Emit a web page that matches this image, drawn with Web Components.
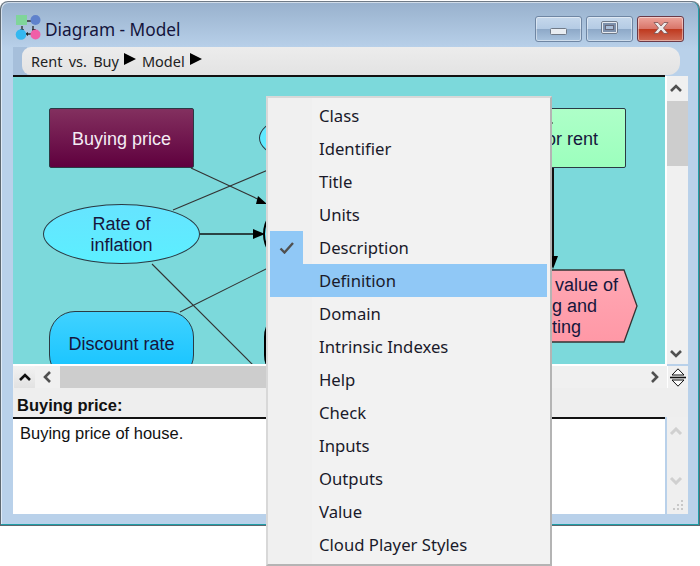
<!DOCTYPE html>
<html>
<head>
<meta charset="utf-8">
<title>Diagram - Model</title>
<style>
  html, body { margin: 0; padding: 0; background: #fff; overflow: hidden; height: 566px; }
  body { position: relative; font-family: "Noto Sans", "Liberation Sans", sans-serif; }
</style>
</head>
<body>
<app-window>
  <span slot="title">Diagram - Model</span>
  <crumb-bar slot="crumbs">
    <span>Rent vs. Buy</span>
    <span>Model</span>
  </crumb-bar>
  <diagram-canvas slot="canvas">
    <diagram-node kind="rect" x="36" y="31" w="145" h="60" top="3" fill="#83305f,#5f003e" color="#f4ecf4">Buying price</diagram-node>
    <diagram-node kind="oval" x="30" y="127" w="157" h="60" top="2" fill="#66e4ff,#5cefff">Rate of<br>inflation</diagram-node>
    <diagram-node kind="round" x="36" y="234" w="145" h="70" fill="#40d2ff,#12c2ff" pad="4">Discount rate</diagram-node>
    <diagram-node kind="oval" x="246" y="31" w="157" h="60" fill="#66e4ff,#5cefff"></diagram-node>
    <diagram-node kind="oval" x="250" y="107" w="157" h="100" fill="#66e4ff,#5cefff" heavy></diagram-node>
    <diagram-node kind="round" x="251" y="234" w="145" h="70" fill="#40d2ff,#12c2ff" heavy></diagram-node>
    <diagram-node kind="rect" x="520" y="31" w="93" h="60" top="3" fill="#aeffc8,#9cffbd" align="right" pad-right="27">or rent</diagram-node>
    <diagram-node kind="hex" x="520" y="192" w="105" h="74" fill="#ffa8b4,#ff98a6" align="left" pad-left="19"><span style="margin-left:3px">value of</span><br>g and<br>ting</diagram-node>
  </diagram-canvas>
  <scroll-v slot="vscroll"></scroll-v>
  <scroll-h slot="hscroll"></scroll-h>
  <span slot="detail-title">Buying price:</span>
  <span slot="detail-body">Buying price of house.</span>
</app-window>
<popup-menu>
  <menu-item>Class</menu-item>
  <menu-item>Identifier</menu-item>
  <menu-item>Title</menu-item>
  <menu-item>Units</menu-item>
  <menu-item checked>Description</menu-item>
  <menu-item active>Definition</menu-item>
  <menu-item>Domain</menu-item>
  <menu-item>Intrinsic Indexes</menu-item>
  <menu-item>Help</menu-item>
  <menu-item>Check</menu-item>
  <menu-item>Inputs</menu-item>
  <menu-item>Outputs</menu-item>
  <menu-item>Value</menu-item>
  <menu-item>Cloud Player Styles</menu-item>
</popup-menu>

<script>
class AppWindow extends HTMLElement {
  connectedCallback() {
    this.attachShadow({ mode: 'open' });
    this.shadowRoot.innerHTML = `
      <style>
        :host {
          display: block;
          box-sizing: border-box;
          width: 700px;
          height: 525px;
          border: 1px solid #5e6870;
          border-top-color: #6f7a86;
          border-radius: 8px 8px 0 0;
          background: linear-gradient(#98b1cd 0, #b9d1ea 47px, #b9d1ea 100%);
          box-shadow: inset 0 -1px 0 #1f9fa8, inset -1px 0 0 #1f9fa8, inset 1px 1px 0 rgba(255,255,255,.55);
          padding: 0 10px 9px 12px;
          margin-top: 1px;
        }
        .titlebar {
          height: 45px;
          display: flex;
          align-items: center;
          padding-left: 2px;
          gap: 4px;
          font: 17.300px "Noto Sans", sans-serif;
          color: #14143c;
        }
        .titlebar .text { flex: 1; padding-top: 9px; }
        .titlebar svg.app { margin-top: 5px; }
        .buttons { display: flex; gap: 4px; margin: 0 5px 0 0; align-self: flex-start; padding-top: 14px; }
        .wbtn {
          box-sizing: border-box;
          width: 47px;
          height: 26px;
          border: 1px solid #6f86a3;
          border-radius: 3px;
          box-shadow: inset 0 0 0 1px rgba(255,255,255,.45);
          background: linear-gradient(#c6d8ec 0, #b4cbe4 48%, #8ea9c8 52%, #a9c3de 100%);
          display: flex;
          align-items: center;
          justify-content: center;
        }
        .wbtn.close {
          border-color: #6b3a48;
          background: linear-gradient(#eda59c 0, #d9766a 48%, #bf3a20 52%, #cf6a55 100%);
        }
        .crumbs { margin-right: 9px; }
        .pane { display: flex; height: 289px; }
        .canvas { width: 652px; height: 289px; flex: none; }
        .vbar { width: 23px; flex: none; }
        .gap { height: 2px; width: 654px; background: #fff; }
        .split { height: 22px; }
        .detail-head {
          height: 29px;
          background: #eeeeee;
          box-sizing: border-box;
          padding: 8px 0 0 4px;
          font: bold 16.500px "Liberation Sans", sans-serif;
          color: #111;
        }
        .detail-row { display: flex; height: 97px; }
        .detail-text {
          width: 652px;
          flex: none;
          box-sizing: border-box;
          background: #fff;
          border-top: 2px solid #111;
          padding: 5px 0 0 7px;
          font: 16.500px "Liberation Sans", sans-serif;
          color: #111;
        }
        .detail-bar {
          flex: none;
          width: 21px;
          margin-left: 2px;
          background: #efefef;
          position: relative;
          display: flex;
          flex-direction: column;
          align-items: center;
          padding: 10px 3px 0 0;
          box-sizing: border-box;
          gap: 40px;
        }
        .grip { position: absolute; right: 4px; bottom: 3px; }
        .lower { width: 675px; }
      </style>
      <div class="titlebar">
        <svg class="app" width="26" height="26" viewBox="0 0 26 26">
          <path d="M11 7h7M7 12v6M18 12v6M11 20h6" stroke="#333" stroke-width="1.4"/>
          <path d="M18 5l3 2-3 2zM5 15l2 3 2-3zM17 15l2 3 2-3zM13 18l-3 2 3 2z" fill="#222"/>
          <rect x="1" y="1" width="11" height="10" fill="#7fd59a"/>
          <circle cx="20.500" cy="6" r="5" fill="#5f82cc"/>
          <circle cx="6" cy="20.500" r="5.300" fill="#34b8f0"/>
          <circle cx="20.500" cy="20.500" r="5" fill="#f05fa8"/>
        </svg>
        <span class="text"><slot name="title"></slot></span>
        <div class="buttons">
          <div class="wbtn">
            <svg width="18" height="8" style="margin-top:5px"><rect x=".5" y=".5" width="16" height="6" rx="1" fill="#e9edf2" stroke="#707a88"/></svg>
          </div>
          <div class="wbtn">
            <svg width="18" height="14" style="margin-top:-2px"><rect x="1" y="1" width="15" height="11" rx="1" fill="#7d90ab" stroke="#e6eaf0" stroke-width="2"/><rect x=".5" y=".5" width="16" height="12" rx="1.500" fill="none" stroke="#6e7a8a"/><rect x="4.500" y="4.500" width="8" height="4" fill="#a9bed8" stroke="#667"/></svg>
          </div>
          <div class="wbtn close">
            <svg width="20" height="14" style="margin-top:-2px"><path d="M3 1.500h4L10 5l3-3.500h4L12.500 7 17 12.500h-4L10 9l-3 3.500H3L7.500 7z" fill="#eceaea" stroke="#7a5050" stroke-width=".8"/></svg>
          </div>
        </div>
      </div>
      <div class="crumbs"><slot name="crumbs"></slot></div>
      <div class="pane">
        <div class="canvas"><slot name="canvas"></slot></div>
        <div class="vbar"><slot name="vscroll"></slot></div>
      </div>
      <div class="gap"></div>
      <div class="lower">
        <div class="split"><slot name="hscroll"></slot></div>
        <div class="detail-head"><slot name="detail-title"></slot></div>
        <div class="detail-row">
          <div class="detail-text"><slot name="detail-body"></slot></div>
          <div class="detail-bar">
            <svg width="14" height="9"><path d="M2 7l5-5 5 5" fill="none" stroke="#d0d0d0" stroke-width="3"/></svg>
            <svg width="14" height="9"><path d="M2 2l5 5 5-5" fill="none" stroke="#d0d0d0" stroke-width="3"/></svg>
            <svg class="grip" width="12" height="12" fill="#c8c8c8"><rect x="9" y="1" width="2" height="2"/><rect x="5" y="5" width="2" height="2"/><rect x="9" y="5" width="2" height="2"/><rect x="1" y="9" width="2" height="2"/><rect x="5" y="9" width="2" height="2"/><rect x="9" y="9" width="2" height="2"/></svg>
          </div>
        </div>
      </div>
    `;
  }
}

class CrumbBar extends HTMLElement {
  connectedCallback() {
    this.attachShadow({ mode: 'open' });
    this.shadowRoot.innerHTML = `
      <style>
        :host {
          display: block;
          height: 28px;
          background: linear-gradient(to right, #a6bfdb 14px, transparent 14px);
          font: 14.500px "Noto Sans", sans-serif;
          word-spacing: 2.500px;
          color: #222;
        }
        .bar {
          box-sizing: border-box;
          height: 28px;
          margin-left: 9px;
          border-radius: 9px 12px 12px 9px;
          background: linear-gradient(#ececec, #e3e3e3);
          display: flex;
          align-items: center;
          padding-left: 9px;
        }
        ::slotted(span) { display: inline-flex; align-items: center; }
        .arrow { width: 12px; height: 12px; margin: -4px 6px 0 5px; flex: none; }
      </style>
      <div class="bar" id="bar"></div>
    `;
    const bar = this.shadowRoot.getElementById('bar');
    [...this.children].forEach((c, i) => {
      const name = 'c' + i;
      c.slot = name;
      const s = document.createElement('slot');
      s.name = name;
      bar.appendChild(s);
      bar.insertAdjacentHTML('beforeend', '<svg class="arrow" viewBox="0 0 12 12"><path d="M0 0l12 6-12 6z" fill="#000"/></svg>');
    });
  }
}

class DiagramCanvas extends HTMLElement {
  connectedCallback() {
    this.attachShadow({ mode: 'open' });
    this.shadowRoot.innerHTML = `
      <style>
        :host {
          display: block;
          position: relative;
          box-sizing: border-box;
          width: 652px;
          height: 289px;
          background: #7cd9db;
          border-top: 2px solid #111;
          overflow: hidden;
        }
        svg { position: absolute; left: 0; top: 0; }
        .wires { stroke: #333; stroke-width: 1.100; fill: none; }
      </style>
      <slot></slot>
      <svg width="652" height="287" viewBox="13 77 652 287">
        <g class="wires">
          <path d="M191 168L262 201"/>
          <path d="M173 210L268 170"/>
          <path d="M200 234H256" stroke="#111" stroke-width="1.500"/>
          <path d="M180 312L268 268"/>
          <path d="M152 264L253 365"/>
          <path d="M553 168V258" stroke="#111" stroke-width="2"/>
          <path d="M549 123H553"/>
        </g>
        <path d="M253 229l12 5-12 5z" fill="#000"/>
        <path d="M258 196l9 8-11 0z" fill="#000"/>
        <path d="M548 256h10l-5 13z" fill="#000"/>
      </svg>
    `;
  }
}

class DiagramNode extends HTMLElement {
  connectedCallback() {
    const a = n => this.getAttribute(n);
    const kind = a('kind');
    const [c1, c2] = a('fill').split(',');
    const w = +a('w'), h = +a('h');
    this.attachShadow({ mode: 'open' });
    const hex = kind === 'hex'
      ? `<svg width="${w}" height="${h}" style="position:absolute;left:0;top:0"><defs><linearGradient id="g" x1="0" y1="0" x2="0" y2="1"><stop offset="0" stop-color="${c1}"/><stop offset="1" stop-color="${c2}"/></linearGradient></defs><polygon points="1,1 ${w - 14},1 ${w - 1},${h / 2} ${w - 14},${h - 1} 1,${h - 1}" fill="url(#g)" stroke="#333" stroke-width="1.300"/></svg>`
      : '';
    const radius = kind === 'oval' ? '50%' : kind === 'round' ? '26px' : '2px';
    this.shadowRoot.innerHTML = `
      <style>
        :host {
          display: block;
          position: absolute;
          box-sizing: border-box;
          left: ${a('x')}px;
          top: ${a('y')}px;
          width: ${w}px;
          height: ${h}px;
        }
        .box {
          position: relative;
          box-sizing: border-box;
          width: 100%;
          height: 100%;
          display: flex;
          align-items: center;
          justify-content: ${a('align') === 'left' ? 'flex-start' : a('align') === 'right' ? 'flex-end' : 'center'};
          text-align: ${a('align') || 'center'};
          padding: ${a('top') || 0}px ${a('pad-right') || 0}px ${a('pad') || 0}px ${a('pad-left') || 0}px;
          border-radius: ${radius};
          ${kind === 'hex' ? '' : `border: ${this.hasAttribute('heavy') ? '2px solid #000' : '1.5px solid #2a3a44'};
          background: linear-gradient(${c1}, ${c2});`}
          font: 18px/21px "Liberation Sans", sans-serif;
          color: ${a('color') || '#16163c'};
        }
        .label { position: relative; }
      </style>
      <div class="box">${hex}<span class="label"><slot></slot></span></div>
    `;
  }
}

class ScrollV extends HTMLElement {
  connectedCallback() {
    this.attachShadow({ mode: 'open' });
    this.shadowRoot.innerHTML = `
      <style>
        :host {
          display: block;
          box-sizing: border-box;
          height: 288px;
          margin-top: 1px;
          width: 23px;
          border-left: 2px solid #fff;
          background: #f0f0f0;
        }
        .inner { display: flex; flex-direction: column; height: 100%; }
        .btn { height: 25px; display: flex; align-items: center; justify-content: center; flex: none; padding-right: 3px; }
        .btn.down { height: 21px; }
        .track { flex: 1; }
        .thumb { height: 65px; background: #cdcdcd; }
      </style>
      <div class="inner">
        <div class="btn"><svg width="14" height="9"><path d="M2 7l5-5 5 5" fill="none" stroke="#505050" stroke-width="2.600"/></svg></div>
        <div class="thumb"></div>
        <div class="track"></div>
        <div class="btn down"><svg width="14" height="9"><path d="M2 2l5 5 5-5" fill="none" stroke="#505050" stroke-width="2.600"/></svg></div>
      </div>
    `;
  }
}

class ScrollH extends HTMLElement {
  connectedCallback() {
    this.attachShadow({ mode: 'open' });
    this.shadowRoot.innerHTML = `
      <style>
        :host {
          display: flex;
          height: 22px;
          width: 675px;
          background: #f0f0f0;
        }
        .collapse {
          width: 21px;
          margin-left: 1px;
          flex: none;
          background: linear-gradient(#f2f2f2, #e2e2e2);
          display: flex; align-items: center; justify-content: center;
        }
        .left { width: 25px; flex: none; display: flex; align-items: center; justify-content: center; }
        .track { width: 480px; background: #cdcdcd; flex: none; }
        .rest { flex: 1; display: flex; align-items: center; justify-content: flex-end; padding-right: 8px; width: 0; }
        .sep { width: 1px; background: #fff; flex: none; }
        .splitter { width: 20px; flex: none; display: flex; align-items: center; justify-content: center; }
      </style>
      <div class="collapse"><svg width="14" height="9"><path d="M2 7l5-5 5 5" fill="none" stroke="#111" stroke-width="2.600"/></svg></div>
      <div class="left"><svg width="9" height="14"><path d="M7 2L2 7l5 5" fill="none" stroke="#505050" stroke-width="2.600"/></svg></div>
      <div class="track"></div>
      <div class="rest"><svg width="9" height="14"><path d="M2 2l5 5-5 5" fill="none" stroke="#505050" stroke-width="2.600"/></svg></div>
      <div class="sep"></div>
      <div class="splitter">
        <svg width="16" height="19"><path d="M8 .8L14 7H2zM2 12h12l-6 6.200z" fill="#fff" stroke="#111"/><path d="M0 9.500h16" stroke="#111" stroke-width="1.600"/></svg>
      </div>
    `;
  }
}

class PopupMenu extends HTMLElement {
  connectedCallback() {
    this.attachShadow({ mode: 'open' });
    this.shadowRoot.innerHTML = `
      <style>
        :host {
          display: block;
          position: absolute;
          left: 266px;
          top: 96px;
          box-sizing: border-box;
          width: 286px;
          height: 470px;
          padding: 1px 2px 2px;
          background: linear-gradient(to right, #f0f0f0 44px, #f2f2f2 44px);
          border: 2px solid;
          border-color: #d8d8d8 #b4b4b4 #b4b4b4 #d8d8d8;
        }
      </style>
      <slot></slot>
    `;
  }
}

class MenuItem extends HTMLElement {
  connectedCallback() {
    this.attachShadow({ mode: 'open' });
    this.shadowRoot.innerHTML = `
      <style>
        :host {
          display: flex;
          align-items: center;
          height: 33px;
          width: 277px;
          font: 16.700px "Noto Sans", sans-serif;
          color: #1a1a2a;
        }
        :host([active]) { background: #90c8f6; }
        .gutter { width: 33px; height: 33px; display: flex; align-items: center; justify-content: center; flex: none; }
        :host([checked]) .gutter { background: #90c8f6; }
        svg { display: none; }
        :host([checked]) svg { display: block; }
        .text { padding-left: 16px; }
      </style>
      <div class="gutter">
        <svg width="16" height="12" viewBox="0 0 16 12"><path d="M1.500 6.500l4 4 8.500-9.500" fill="none" stroke="#505050" stroke-width="2.400"/></svg>
      </div>
      <span class="text"><slot></slot></span>
    `;
  }
}

customElements.define('app-window', AppWindow);
customElements.define('crumb-bar', CrumbBar);
customElements.define('diagram-canvas', DiagramCanvas);
customElements.define('diagram-node', DiagramNode);
customElements.define('scroll-v', ScrollV);
customElements.define('scroll-h', ScrollH);
customElements.define('popup-menu', PopupMenu);
customElements.define('menu-item', MenuItem);
</script>
</body>
</html>
